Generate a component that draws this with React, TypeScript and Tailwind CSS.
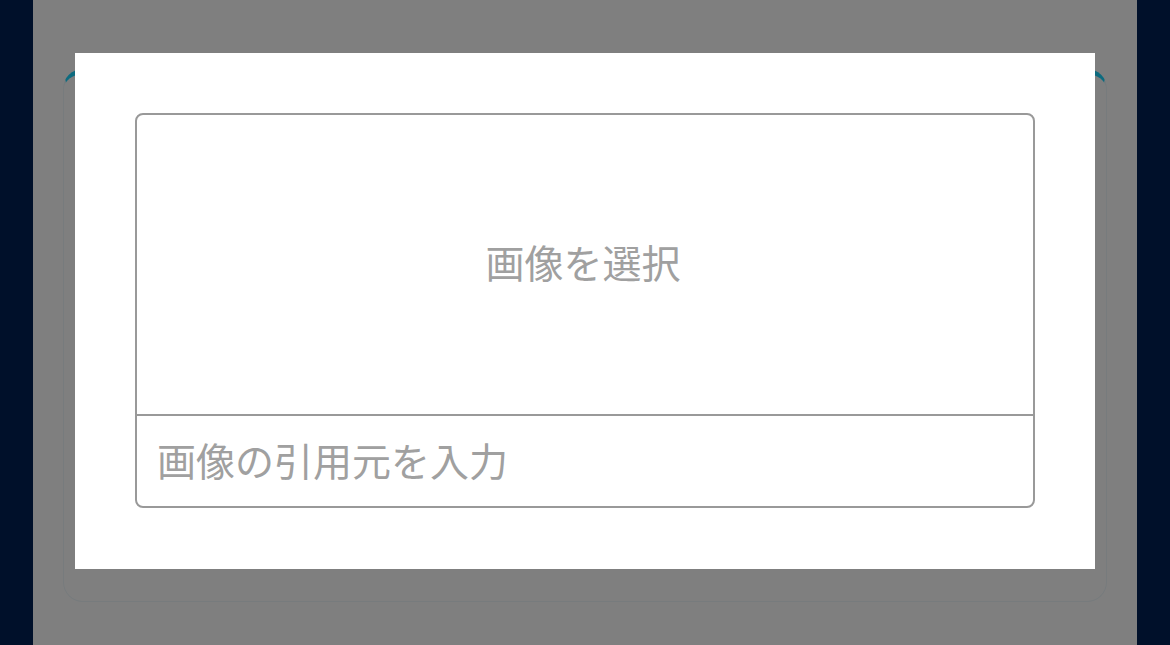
import React from 'react';

const jp = { fontFamily: '"Noto Sans CJK JP", "Noto Sans", sans-serif' };

export default function App() {
  return (
    <div className="h-[645px] w-full bg-[#00102a] overflow-hidden" style={jp}>
      <div className="relative mx-auto h-full w-[1104px] bg-white px-[30px] pt-[69px]">
        {/* page card behind the modal */}
        <div className="h-[533px] rounded-[20px] border border-[#eef6fa] border-t-[5px] border-t-[#1ad6ff] bg-white" />

        {/* overlay */}
        <div className="absolute inset-0 bg-black/50">
          <div className="mx-auto mt-[53px] w-[1020px] bg-white p-[60px] pb-[61px]">
            <div className="flex flex-col overflow-hidden rounded-lg border-2 border-[#999999]">
              <button
                type="button"
                className="flex h-[299px] items-center justify-center pb-[6px] pr-[4px] text-[39px] text-[#a0a0a0]"
              >
                画像を選択
              </button>
              <input
                type="text"
                placeholder="画像の引用元を入力"
                className="h-[92px] border-t-2 border-[#999999] pb-[5px] pl-[20px] pr-[18px] text-[39px] text-gray-700 outline-none placeholder:text-[#a0a0a0]"
              />
            </div>
          </div>
        </div>
      </div>
    </div>
  );
}
